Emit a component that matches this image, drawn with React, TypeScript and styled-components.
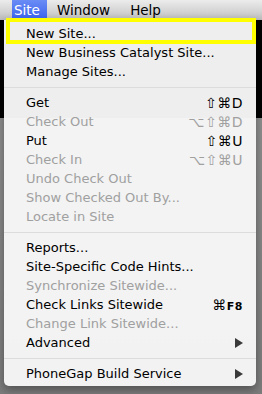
import * as React from "react";
import styled, { createGlobalStyle } from "styled-components";

const GlobalStyle = createGlobalStyle`
	html, body {
		margin: 0;
		padding: 0;
		background: #8c8c8c;
	}
	#root {
		width: 262px;
		height: 394px;
		overflow: hidden;
	}
`;

type Entry =
	| { kind: "item"; label: string; disabled?: boolean; keys?: string; fkey?: string; submenu?: boolean }
	| { kind: "sep" };

const entries: Entry[] = [
	{ kind: "item", label: "New Site..." },
	{ kind: "item", label: "New Business Catalyst Site..." },
	{ kind: "item", label: "Manage Sites..." },
	{ kind: "sep" },
	{ kind: "item", label: "Get", keys: "⇧⌘D" },
	{ kind: "item", label: "Check Out", keys: "⌥⇧⌘D", disabled: true },
	{ kind: "item", label: "Put", keys: "⇧⌘U" },
	{ kind: "item", label: "Check In", keys: "⌥⇧⌘U", disabled: true },
	{ kind: "item", label: "Undo Check Out", disabled: true },
	{ kind: "item", label: "Show Checked Out By...", disabled: true },
	{ kind: "item", label: "Locate in Site", disabled: true },
	{ kind: "sep" },
	{ kind: "item", label: "Reports..." },
	{ kind: "item", label: "Site-Specific Code Hints..." },
	{ kind: "item", label: "Synchronize Sitewide...", disabled: true },
	{ kind: "item", label: "Check Links Sitewide", keys: "⌘", fkey: "F8" },
	{ kind: "item", label: "Change Link Sitewide...", disabled: true },
	{ kind: "item", label: "Advanced", submenu: true },
	{ kind: "sep" },
	{ kind: "item", label: "PhoneGap Build Service", submenu: true },
];

const Screen = styled.div`
	display: flex;
	flex-direction: column;
	width: 262px;
	height: 394px;
	font-family: "DejaVu Sans", "Liberation Sans", sans-serif;
`;

const MenuBar = styled.div`
	display: flex;
	align-items: stretch;
	height: 20px;
	padding-left: 12px;
	background: linear-gradient(#ececec, #d2d2d2 60%, #b9b9b9);
	font-size: 13.5px;
`;

const BarTitle = styled.div<{ $active?: boolean }>`
	display: flex;
	align-items: center;
	padding: ${(p) => (p.$active ? "0 7px 0 2px" : "0 10px")};
	color: ${(p) => (p.$active ? "#fff" : "#000")};
	background: ${(p) => (p.$active ? "linear-gradient(#6a8cf5, #3a62ee)" : "none")};
`;

const Desktop = styled.div`
	position: relative;
	flex: 1;
	background: linear-gradient(#000 0, #000 98px, #8e8e8e 98px, #7c7c7c 100%);
`;

const Menu = styled.div`
	position: absolute;
	left: 4px;
	top: 0;
	width: 252px;
	padding: 4px 0 3px;
	box-sizing: border-box;
	background: rgba(247, 247, 247, 0.965);
	border-radius: 0 0 5px 5px;
	box-shadow: 0 4px 10px rgba(0, 0, 0, 0.35);
`;

const Row = styled.div<{ $disabled?: boolean }>`
	display: flex;
	align-items: center;
	height: 19px;
	padding: 0 13px 0 22px;
	font-size: 13px;
	color: ${(p) => (p.$disabled ? "#a0a0a0" : "#000")};
	white-space: nowrap;
`;

const Label = styled.span`
	flex: 1;
`;

const Keys = styled.span`
	font-size: 14px;
	letter-spacing: 0.5px;
`;

const FKey = styled.span`
	font-size: 11px;
	font-weight: bold;
`;

const Separator = styled.div`
	height: 12px;
	display: flex;
	align-items: center;
	&::after {
		content: "";
		flex: 1;
		height: 1px;
		background: #dcdcdc;
	}
`;

const Arrow = styled.span`
	width: 0;
	height: 0;
	border-top: 5px solid transparent;
	border-bottom: 5px solid transparent;
	border-left: 8px solid #3a3a3a;
`;

const Highlight = styled.div`
	position: absolute;
	left: 6px;
	top: -2px;
	width: 250px;
	height: 26px;
	box-sizing: border-box;
	border: 4px solid #ffff00;
	pointer-events: none;
`;

export default function App() {
	return (
		<Screen>
			<GlobalStyle />
			<MenuBar>
				<BarTitle $active>Site</BarTitle>
				<BarTitle>Window</BarTitle>
				<BarTitle>Help</BarTitle>
			</MenuBar>
			<Desktop>
				<Menu>
					{entries.map((e, i) =>
						e.kind === "sep" ? (
							<Separator key={i} />
						) : (
							<Row key={i} $disabled={e.disabled}>
								<Label>{e.label}</Label>
								{e.keys && (
									<Keys>
										{e.keys}
										{e.fkey && <FKey>{e.fkey}</FKey>}
									</Keys>
								)}
								{e.submenu && <Arrow />}
							</Row>
						)
					)}
				</Menu>
				<Highlight />
			</Desktop>
		</Screen>
	);
}
